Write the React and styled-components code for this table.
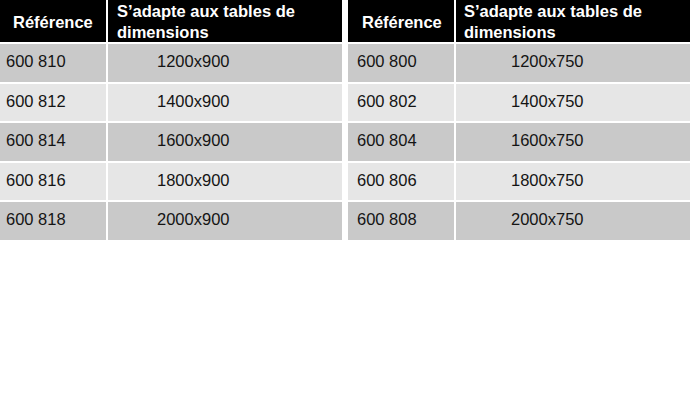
import React from 'react'
import styled, { createGlobalStyle } from 'styled-components'

const GlobalStyle = createGlobalStyle`
  html, body {
    margin: 0;
    padding: 0;
    background: #ffffff;
  }
  body {
    font-family: "Liberation Sans", Arial, sans-serif;
  }
`

const Page = styled.div`
  width: 690px;
  height: 401px;
  display: flex;
  align-items: flex-start;
  gap: 6px;
`

const Table = styled.div`
  width: 342px;
  display: grid;
  grid-template-columns: 106px 1fr;
  grid-template-rows: 42px repeat(5, 37.5px);
  column-gap: 2px;
  row-gap: 2px;
`

const HeadCell = styled.div`
  background: #000000;
  color: #ffffff;
  font-weight: 700;
  font-size: 16.5px;
  line-height: 21px;
  padding: ${p => p.$top}px 0 0 ${p => p.$left}px;
  white-space: ${p => (p.$wrap ? 'normal' : 'nowrap')};
  overflow: visible;
`

const Cell = styled.div`
  background: ${p => (p.$light ? '#e6e6e6' : '#c9c9c9')};
  color: #141414;
  font-size: 16.5px;
  line-height: 21px;
  padding: 7px 0 0 ${p => p.$left}px;
  white-space: nowrap;
`

const tables = [
  {
    refPad: 13,
    headPad: 9,
    codePad: 6,
    sizePad: 49,
    rows: [
      ['600 810', '1200x900'],
      ['600 812', '1400x900'],
      ['600 814', '1600x900'],
      ['600 816', '1800x900'],
      ['600 818', '2000x900'],
    ],
  },
  {
    refPad: 14,
    headPad: 8,
    codePad: 9,
    sizePad: 55,
    rows: [
      ['600 800', '1200x750'],
      ['600 802', '1400x750'],
      ['600 804', '1600x750'],
      ['600 806', '1800x750'],
      ['600 808', '2000x750'],
    ],
  },
]

export default function App() {
  return (
    <>
      <GlobalStyle />
      <Page>
        {tables.map((t, ti) => (
          <Table key={ti}>
            <HeadCell $top={12} $left={t.refPad}>Référence</HeadCell>
            <HeadCell $top={1} $left={t.headPad} $wrap>
              S’adapte aux tables de dimensions
            </HeadCell>
            {t.rows.map((row, i) => (
              <React.Fragment key={i}>
                <Cell $light={i % 2 === 1} $left={t.codePad}>{row[0]}</Cell>
                <Cell $light={i % 2 === 1} $left={t.sizePad}>{row[1]}</Cell>
              </React.Fragment>
            ))}
          </Table>
        ))}
      </Page>
    </>
  )
}
